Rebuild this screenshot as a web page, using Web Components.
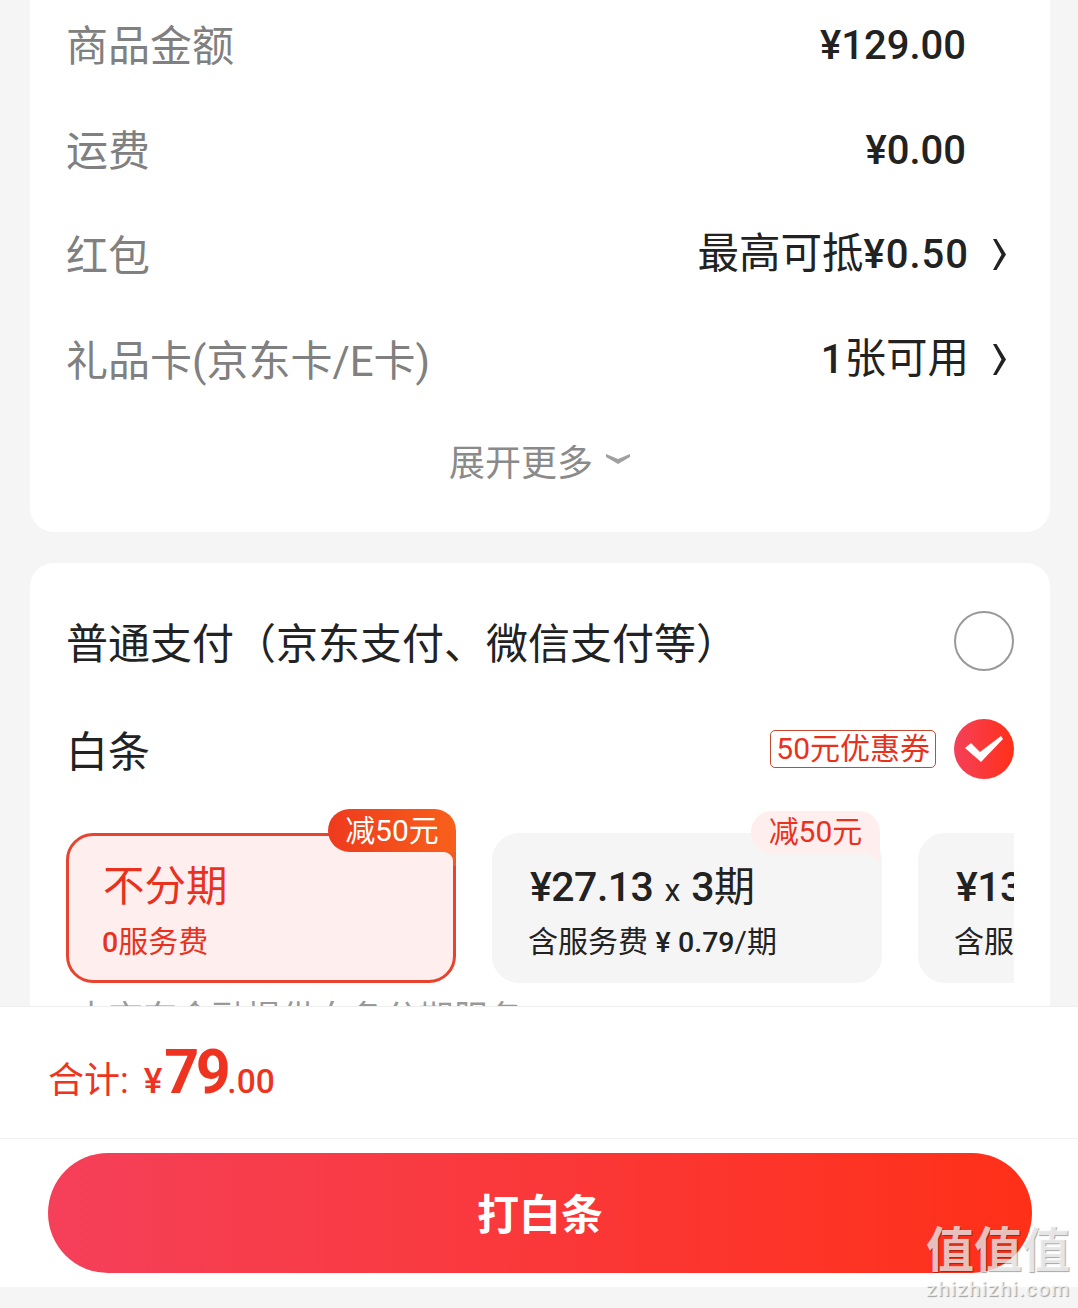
<!DOCTYPE html>
<html>
<head>
<meta charset="utf-8">
<style>
html, body { margin: 0; padding: 0; }
body {
	width: 1078px;
	height: 1308px;
	overflow: hidden;
	background: #f5f5f5;
	font-family: Roboto, "Noto Sans CJK SC", sans-serif;
}
</style>
</head>
<body>
<checkout-page>
	<info-card>
		<info-row label="商品金额" value="¥129.00"></info-row>
		<info-row label="运费" value="¥0.00"></info-row>
		<info-row label="红包" value="最高可抵¥0.50" arrow></info-row>
		<info-row label="礼品卡(京东卡/E卡)" value="1张可用" arrow></info-row>
		<more-toggle>展开更多</more-toggle>
	</info-card>
	<pay-card>
		<pay-option label="普通支付（京东支付、微信支付等）"></pay-option>
		<pay-option label="白条" coupon="50元优惠券" checked></pay-option>
		<plan-list>
			<plan-item active badge="减50元" title="不分期" note="0服务费"></plan-item>
			<plan-item badge="减50元" title="¥27.13 x 3期" note="含服务费 ¥ 0.79/期"></plan-item>
			<plan-item title="¥13.56 x 6期" note="含服务费 ¥ 0.39/期"></plan-item>
		</plan-list>
		<div slot="hint">由京东金融提供白条分期服务</div>
	</pay-card>
	<total-bar whole="79" cents=".00"></total-bar>
	<pay-button>打白条</pay-button>
	<water-mark></water-mark>
</checkout-page>
<script>
// wraps the digits so they can get their own weight next to the CJK text
function markDigits(text){
	return text.replace(/[¥0-9.]+/g,(m)=>`<span class="num">${m}</span>`);
}

class CheckoutPage extends HTMLElement {
	constructor(){
		super();
		this.attachShadow({mode:"open"});
		this.shadowRoot.innerHTML = `
			<style>
				:host {
					display: flex;
					flex-direction: column;
					position: relative;
					width: 1078px;
					height: 1308px;
					overflow: hidden;
				}
				.scroll {
					height: 1006px;
					overflow: hidden;
					flex: none;
				}
			</style>
			<div class="scroll"><slot></slot></div>
			<slot name="foot"></slot>
		`;
	}
	connectedCallback(){
		for (const el of this.querySelectorAll("total-bar,pay-button,water-mark")){
			el.slot = "foot";
		}
	}
}
customElements.define("checkout-page",CheckoutPage);

class InfoCard extends HTMLElement {
	constructor(){
		super();
		this.attachShadow({mode:"open"});
		this.shadowRoot.innerHTML = `
			<style>
				:host {
					display: block;
					margin: -6px 28px 0 30px;
					padding: 0 44px 0 36px;
					height: 538px;
					box-sizing: border-box;
					background: #fff;
					border-radius: 0 0 24px 24px;
				}
			</style>
			<slot></slot>
		`;
	}
}
customElements.define("info-card",InfoCard);

class InfoRow extends HTMLElement {
	constructor(){
		super();
		this.attachShadow({mode:"open"});
		this.shadowRoot.innerHTML = `
			<style>
				:host {
					display: flex;
					align-items: center;
					justify-content: space-between;
					height: 105px;
				}
				.label {
					font-size: 42px;
					line-height: 60px;
					color: #808080;
				}
				.right {
					display: flex;
					align-items: center;
				}
				.value {
					font-size: 41.5px;
					line-height: 60px;
					color: #222;
					margin: 0 40px 3px 0;
				}
				.num {
					font-size: 40px;
					font-weight: 500;
				}
				svg {
					display: none;
					width: 13px;
					height: 31px;
					margin: 0 0 4px 24px;
				}
				:host([arrow]) .value { margin: 0 0 5px 0; }
				:host([arrow]) .num { letter-spacing: 1px; }
				:host([arrow]) svg { display: block; }
			</style>
			<span class="label"></span>
			<span class="right">
				<span class="value"></span>
				<svg viewBox="0 0 13 31"><path d="M0 0 L3.5 0 L13 15.5 L3.5 31 L0 31 L8.5 15.5 Z" fill="#222"/></svg>
			</span>
		`;
		this.shadowRoot.querySelector(".label").textContent = this.getAttribute("label");
		this.shadowRoot.querySelector(".value").innerHTML = markDigits(this.getAttribute("value"));
	}
}
customElements.define("info-row",InfoRow);

class MoreToggle extends HTMLElement {
	constructor(){
		super();
		this.attachShadow({mode:"open"});
		this.shadowRoot.innerHTML = `
			<style>
				:host {
					display: flex;
					justify-content: center;
					align-items: center;
					gap: 12px;
					height: 84px;
					box-sizing: border-box;
					padding-top: 8px;
					margin-left: 8px;
					font-size: 36px;
					color: #8a8a8a;
				}
				svg { width: 26px; height: 14px; margin-top: -3px; }
			</style>
			<slot></slot>
			<svg viewBox="0 0 26 14"><path d="M1 2 L13 7 L25 2 L25 5 L13 12 L1 5 Z" fill="#a0a0a0"/></svg>
		`;
	}
}
customElements.define("more-toggle",MoreToggle);

class PayCard extends HTMLElement {
	constructor(){
		super();
		this.attachShadow({mode:"open"});
		this.shadowRoot.innerHTML = `
			<style>
				:host {
					display: block;
					margin: 31px 28px 0 30px;
					padding: 24px 36px 0 36px;
					background: #fff;
					border-radius: 24px 24px 0 0;
				}
				.hint {
					margin: 11px 0 0 8px;
					font-size: 34.5px;
					line-height: 48px;
					color: #999;
				}
			</style>
			<slot></slot>
			<div class="hint"><slot name="hint"></slot></div>
		`;
	}
}
customElements.define("pay-card",PayCard);

class PayOption extends HTMLElement {
	constructor(){
		super();
		this.attachShadow({mode:"open"});
		this.shadowRoot.innerHTML = `
			<style>
				:host {
					display: flex;
					align-items: center;
					height: 108px;
					font-size: 42px;
					color: #222;
				}
				.label { flex: 1; margin: 0 0 2px 0; }
				.coupon {
					display: none;
					height: 38px;
					line-height: 36px;
					box-sizing: border-box;
					padding: 0 5px;
					margin-right: 18px;
					border: 1px solid #c8492f;
					border-radius: 5px;
					font-size: 30px;
					color: #e8321e;
				}
				:host([coupon]) .coupon { display: block; }
				.radio {
					flex: none;
					width: 60px;
					height: 60px;
					box-sizing: border-box;
					border: 2px solid #999;
					border-radius: 50%;
				}
				.radio svg { display: none; width: 100%; height: 100%; }
				:host([checked]) .radio {
					border: none;
					background: linear-gradient(90deg,#f5405a,#ff3018);
				}
				:host([checked]) .radio svg { display: block; }
			</style>
			<span class="label"></span>
			<span class="coupon"></span>
			<span class="radio">
				<svg viewBox="0 0 60 60"><path d="M11 29 L17 24 L26 33 L47 17 L49 20 L27 43 Z" fill="#fff"/></svg>
			</span>
		`;
		this.shadowRoot.querySelector(".label").textContent = this.getAttribute("label");
		this.shadowRoot.querySelector(".coupon").textContent = this.getAttribute("coupon");
	}
}
customElements.define("pay-option",PayOption);

class PlanList extends HTMLElement {
	constructor(){
		super();
		this.attachShadow({mode:"open"});
		this.shadowRoot.innerHTML = `
			<style>
				:host {
					display: flex;
					gap: 36px;
					margin-top: 6px;
					padding-top: 24px;
					overflow: hidden;
				}
			</style>
			<slot></slot>
		`;
	}
}
customElements.define("plan-list",PlanList);

class PlanItem extends HTMLElement {
	constructor(){
		super();
		this.attachShadow({mode:"open"});
		this.shadowRoot.innerHTML = `
			<style>
				:host {
					display: block;
					position: relative;
					flex: none;
					width: 390px;
					height: 150px;
					box-sizing: border-box;
					padding: 29px 36px 0;
					background: #f5f5f5;
					border-radius: 27px;
					color: #222;
				}
				:host([active]) {
					padding: 26px 33px 0;
					background: #ffeeee;
					border: 3px solid #e8432f;
					color: #e8321e;
				}
				.title {
					height: 50px;
					padding-left: 2px;
					font-size: 41px;
					line-height: 50px;
					white-space: nowrap;
				}
				:host([active]) .title { padding-left: 1px; font-size: 41.5px; }
				.title .num { font-weight: 500; letter-spacing: -0.5px; }
				.title .by { font-size: 32px; margin: 0 11px; }
				.note {
					height: 44px;
					margin-top: 8px;
					font-size: 30px;
					line-height: 44px;
					white-space: nowrap;
				}
				.note .num { font-size: 28.5px; font-weight: 500; }
				.badge {
					position: absolute;
					right: 2px;
					top: -22px;
					width: 129px;
					height: 42px;
					line-height: 42px;
					text-align: center;
					font-size: 30px;
					color: #e8321e;
					background: #ffeeee;
					border-radius: 22px 22px 0 22px;
				}
				.badge::after {
					content: "";
					position: absolute;
					right: 0;
					top: 100%;
					width: 12px;
					height: 10px;
					background: #ffeeee;
					clip-path: polygon(0 0,100% 0,100% 100%);
				}
				:host([active]) .badge {
					right: -3px;
					top: -27px;
					width: 128px;
					height: 43px;
					line-height: 43px;
					color: #fff;
					background: linear-gradient(90deg,#ee3a1e,#f8601a);
				}
				:host([active]) .badge::before {
					content: "";
					position: absolute;
					right: 0;
					top: 100%;
					width: 14px;
					height: 14px;
					background: #f05a20;
				}
				:host([active]) .badge::after {
					right: 3px;
					width: 11px;
					height: 14px;
					background: #ffeeee;
					clip-path: none;
					border-top-right-radius: 9px;
				}
			</style>
			<div class="badge"></div>
			<div class="title"></div>
			<div class="note"></div>
		`;
		const badge = this.shadowRoot.querySelector(".badge");
		if (this.hasAttribute("badge")){
			badge.textContent = this.getAttribute("badge");
		}else{
			badge.remove();
		}
		this.shadowRoot.querySelector(".title").innerHTML = markDigits(this.getAttribute("title")).replace(" x ",`<span class="by">x</span>`);
		this.shadowRoot.querySelector(".note").innerHTML = markDigits(this.getAttribute("note"));
	}
}
customElements.define("plan-item",PlanItem);

class TotalBar extends HTMLElement {
	constructor(){
		super();
		this.attachShadow({mode:"open"});
		this.shadowRoot.innerHTML = `
			<style>
				:host {
					display: flex;
					align-items: baseline;
					height: 133px;
					box-sizing: border-box;
					padding: 29px 0 0 48px;
					background: #fff;
					border-top: 1px solid #eee;
					border-bottom: 1px solid #f2f2f2;
					color: #ee3420;
					font-size: 36px;
				}
				.label { margin-right: 15px; }
				.yen { font-weight: 500; font-size: 35px; }
				.whole { font-size: 61px; font-weight: 700; line-height: 72px; letter-spacing: -3.5px; margin-left: 2px; }
				.cents { font-weight: 500; font-size: 33.5px; }
			</style>
			<span class="label">合计:</span>
			<span class="yen">¥</span>
			<span class="whole"></span>
			<span class="cents"></span>
		`;
		this.shadowRoot.querySelector(".whole").textContent = this.getAttribute("whole");
		this.shadowRoot.querySelector(".cents").textContent = this.getAttribute("cents");
	}
}
customElements.define("total-bar",TotalBar);

class PayButton extends HTMLElement {
	constructor(){
		super();
		this.attachShadow({mode:"open"});
		this.shadowRoot.innerHTML = `
			<style>
				:host {
					display: block;
					padding: 14px 46px 14px 48px;
					background: #fff;
				}
				.btn {
					height: 120px;
					box-sizing: border-box;
					padding-bottom: 4px;
					border-radius: 60px;
					background: linear-gradient(90deg,#f5405a,#ff3018);
					color: #fff;
					font-size: 42px;
					font-weight: 700;
					display: flex;
					align-items: center;
					justify-content: center;
				}
			</style>
			<div class="btn"><slot></slot></div>
		`;
	}
}
customElements.define("pay-button",PayButton);

class WaterMark extends HTMLElement {
	constructor(){
		super();
		this.attachShadow({mode:"open"});
		this.shadowRoot.innerHTML = `
			<style>
				:host {
					display: block;
					position: absolute;
					left: 926px;
					top: 1222px;
					width: 148px;
					color: rgba(255,255,255,.72);
					text-shadow: 1px 1px 1px rgba(0,0,0,.35);
					pointer-events: none;
				}
				.mark {
					font-size: 48px;
					font-weight: 700;
					line-height: 58px;
					white-space: nowrap;
				}
				.site {
					margin-top: -3px;
					font-size: 21px;
					font-weight: 500;
					line-height: 24px;
					letter-spacing: 1.1px;
					white-space: nowrap;
				}
			</style>
			<div class="mark">值值值</div>
			<div class="site">zhizhizhi.com</div>
		`;
	}
}
customElements.define("water-mark",WaterMark);
</script>
</body>
</html>
